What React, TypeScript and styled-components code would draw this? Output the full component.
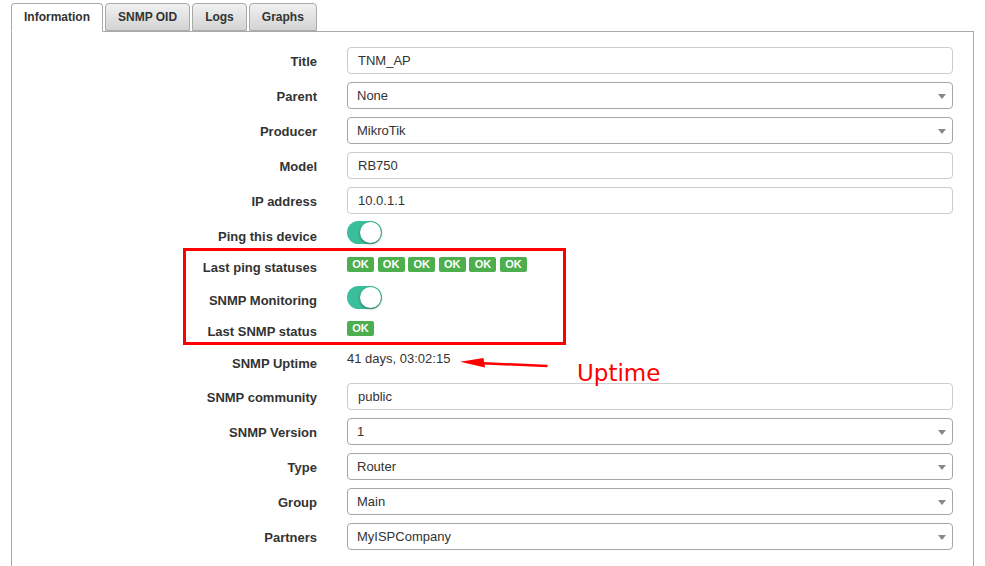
import React from 'react'
import styled, { createGlobalStyle, css } from 'styled-components'

const GlobalStyle = createGlobalStyle`
  html, body {
    margin: 0;
    padding: 0;
    background: #fff;
    overflow: hidden;
  }
  body {
    font-family: 'Liberation Sans', Arial, sans-serif;
    color: #333;
  }
`

const Page = styled.div`
  position: relative;
  width: 985px;
  height: 566px;
  padding-top: 3px;
  box-sizing: border-box;
`

/**
 * ###################### Tabs ######################
 */
const TabBar = styled.div`
  display: flex;
  align-items: flex-end;
  gap: 2px;
  padding-left: 11px;
`

const Tab = styled.div<{ $active?: boolean }>`
  position: relative;
  z-index: 1;
  height: 29px;
  margin-bottom: -1px;
  padding: 0 12px;
  box-sizing: border-box;
  border: 1px solid #aaa;
  border-radius: 4px 4px 0 0;
  font-size: 12px;
  font-weight: 700;
  line-height: 27px;
  color: #333;
  ${({ $active }) =>
    $active
      ? css`
          background: #fff;
          border-bottom-color: #fff;
        `
      : css`
          height: 28px;
          margin-bottom: 0;
          line-height: 26px;
          background: linear-gradient(#f1f1f1, #d3d3d3);
          border-bottom-color: #aaa;
        `}
`

const Panel = styled.div`
  margin-left: 11px;
  width: 963px;
  min-height: 600px;
  box-sizing: border-box;
  border: 1px solid #aaa;
  padding: 15px 19px 0 0;
`

/**
 * ###################### Form ######################
 */
const Form = styled.div`
  display: flex;
  flex-direction: column;
  gap: 8px;
`

const Row = styled.div<{ $height?: number; $extra?: number }>`
  display: grid;
  grid-template-columns: 305px 606px;
  column-gap: 30px;
  min-height: ${({ $height }) => $height ?? 27}px;
  margin-bottom: ${({ $extra }) => $extra ?? 0}px;
`

const Label = styled.div`
  text-align: right;
  font-size: 13px;
  font-weight: 700;
  line-height: 17px;
  padding-top: 6px;
  color: #333;
`

const Field = styled.div<{ $select?: boolean }>`
  position: relative;
  height: 27px;
  box-sizing: border-box;
  border: 1px solid #ccc;
  border-radius: 4px;
  padding: 0 10px;
  font-size: 13px;
  line-height: 25px;
  color: #333;
  ${({ $select }) =>
    $select &&
    css`
      border-color: #a6a6a6;
      padding-left: 9px;
      &::after {
        content: '';
        position: absolute;
        right: 6px;
        top: 11px;
        border-left: 4px solid transparent;
        border-right: 4px solid transparent;
        border-top: 5px solid #888;
      }
    `}
`

const Toggle = styled.span<{ $offset?: number }>`
  position: relative;
  display: block;
  width: 35px;
  height: 23px;
  margin-top: ${({ $offset }) => $offset ?? 0}px;
  border-radius: 12px;
  background: #3bbe9c;
  &::after {
    content: '';
    position: absolute;
    top: 1px;
    right: 1px;
    width: 21px;
    height: 21px;
    border-radius: 50%;
    background: #fff;
    box-shadow: 0 1px 3px rgba(0, 0, 0, 0.4);
  }
`

const Badges = styled.div`
  display: flex;
  gap: 3.6px;
  padding-top: 4px;
`

const Badge = styled.span`
  display: block;
  width: 27px;
  height: 15px;
  border-radius: 2px;
  background: #4cae4c;
  color: #fff;
  font-size: 11px;
  font-weight: 700;
  line-height: 15px;
  text-align: center;
`

const Value = styled.div`
  font-size: 13px;
  line-height: 19px;
  color: #333;
`

/**
 * ###################### Annotations ######################
 */
const Highlight = styled.div`
  position: absolute;
  left: 183px;
  top: 248px;
  width: 383px;
  height: 97px;
  box-sizing: border-box;
  border: 3px solid #f00;
`

const Arrow = styled.svg`
  position: absolute;
  left: 455px;
  top: 352px;
`

const Note = styled.div`
  position: absolute;
  left: 577px;
  top: 362px;
  font-family: 'DejaVu Sans', sans-serif;
  font-size: 23px;
  line-height: 23px;
  color: #f00;
`

type FieldRow = { label: string; value: string; select?: boolean; extra?: number }

const topRows: FieldRow[] = [
  { label: 'Title', value: 'TNM_AP' },
  { label: 'Parent', value: 'None', select: true },
  { label: 'Producer', value: 'MikroTik', select: true },
  { label: 'Model', value: 'RB750' },
  { label: 'IP address', value: '10.0.1.1' },
]

const bottomRows: FieldRow[] = [
  { label: 'SNMP community', value: 'public' },
  { label: 'SNMP Version', value: '1', select: true },
  { label: 'Type', value: 'Router', select: true },
  { label: 'Group', value: 'Main', select: true },
  { label: 'Partners', value: 'MyISPCompany', select: true, extra: 8 },
  { label: 'Location', value: 'All', select: true },
]

function renderRow(row: FieldRow) {
  return (
    <Row key={row.label} $extra={row.extra}>
      <Label>{row.label}</Label>
      <Field $select={row.select}>{row.value}</Field>
    </Row>
  )
}

export default function App() {
  return (
    <Page>
      <GlobalStyle />
      <TabBar>
        <Tab $active>Information</Tab>
        <Tab>SNMP OID</Tab>
        <Tab>Logs</Tab>
        <Tab>Graphs</Tab>
      </TabBar>
      <Panel>
        <Form>
          {topRows.map(renderRow)}
          <Row $height={23}>
            <Label>Ping this device</Label>
            <div>
              <Toggle $offset={-1} />
            </div>
          </Row>
          <Row $height={25}>
            <Label>Last ping statuses</Label>
            <Badges>
              {[0, 1, 2, 3, 4, 5].map((i) => (
                <Badge key={i}>OK</Badge>
              ))}
            </Badges>
          </Row>
          <Row $height={23}>
            <Label>SNMP Monitoring</Label>
            <div>
              <Toggle />
            </div>
          </Row>
          <Row $height={24}>
            <Label>Last SNMP status</Label>
            <Badges>
              <Badge>OK</Badge>
            </Badges>
          </Row>
          <Row $height={26}>
            <Label>SNMP Uptime</Label>
            <Value>41 days, 03:02:15</Value>
          </Row>
          {bottomRows.map(renderRow)}
        </Form>
      </Panel>
      <Highlight />
      <Arrow width="100" height="20" viewBox="0 0 100 20">
        <line x1="22" y1="11" x2="92.5" y2="14" stroke="#f00" strokeWidth="2.5" />
        <polygon points="5,9.7 28.5,6 30,15.6" fill="#f00" />
      </Arrow>
      <Note>Uptime</Note>
    </Page>
  )
}
